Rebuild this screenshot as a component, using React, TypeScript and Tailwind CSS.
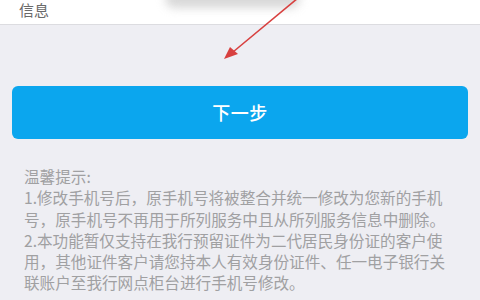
import React from 'react';

const FONT = '"Noto Sans CJK SC", "Noto Sans", sans-serif';

const TIPS = [
  '温馨提示:',
  '1.修改手机号后，原手机号将被整合并统一修改为您新的手机',
  '号，原手机号不再用于所列服务中且从所列服务信息中删除。',
  '2.本功能暂仅支持在我行预留证件为二代居民身份证的客户使',
  '用，其他证件客户请您持本人有效身份证件、任一电子银行关',
  '联账户至我行网点柜台进行手机号修改。',
];

export default function App() {
  return (
    <div
      className="relative w-[480px] h-[300px] overflow-hidden bg-[#eeeef3]"
      style={{ fontFamily: FONT }}
    >
      {/* top row, cut off */}
      <div className="h-[25px] bg-white border-b border-[#dcdce0] flex items-end pl-[19px] pb-[6px]">
        <span className="text-[15px] leading-[17px] text-[#6a6a6a]">信息</span>
      </div>

      {/* blurred highlight from the screenshot */}
      <div className="absolute left-[165px] top-[-10px] w-[135px] h-[18px] rounded-full bg-[#c8c8c8] blur-[5px] opacity-70" />

      {/* annotation arrow */}
      <svg className="absolute left-0 top-0" width="480" height="80" viewBox="0 0 480 80">
        <line x1="298" y1="-2" x2="233" y2="52" stroke="#d8403f" strokeWidth="1.6" />
        <polygon points="224,59 230,47 238,54" fill="#d8403f" />
      </svg>

      <div className="pt-[61px] px-[12px]">
        <button className="w-full h-[53px] rounded-[6px] bg-[#0ba6ee] text-white text-[18px] font-medium tracking-[0.5px]">
          下一步
        </button>
      </div>

      <div className="pt-[27px] pl-[24px] text-[15.6px] leading-[21.3px] text-[#a0a0a2]">
        {TIPS.map((line) => (
          <div key={line} className="whitespace-nowrap">{line}</div>
        ))}
      </div>
    </div>
  );
}
